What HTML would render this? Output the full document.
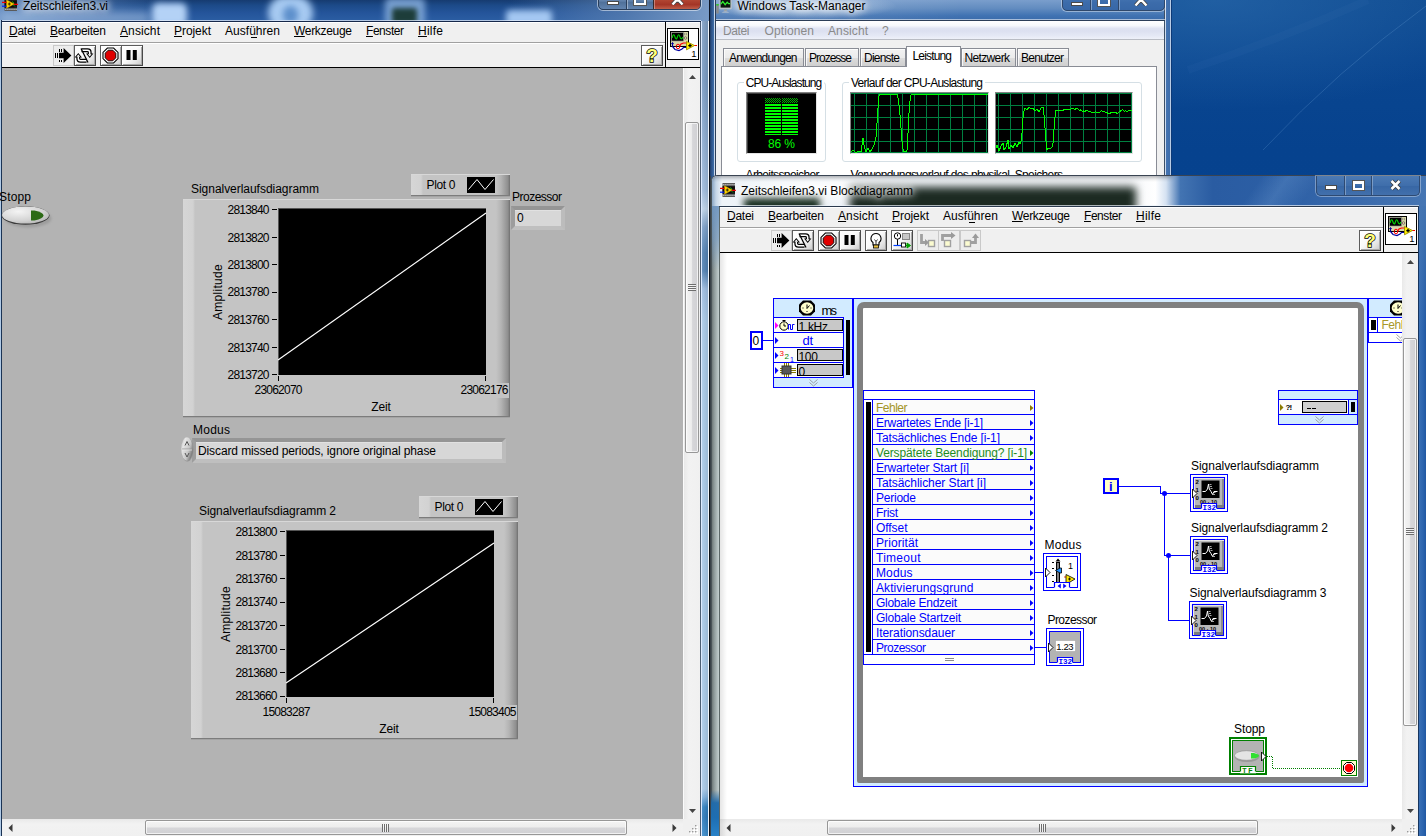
<!DOCTYPE html>
<html lang="de"><head><meta charset="utf-8"><title>Zeitschleifen3.vi</title><style>
html,body{margin:0;padding:0}
body{width:1426px;height:836px;overflow:hidden;position:relative;background:#0b4791;font-family:"Liberation Sans",sans-serif;font-size:12px;color:#000}
.a{position:absolute;box-sizing:border-box}
.t{position:absolute;white-space:nowrap}
.m::first-letter{text-decoration:underline;text-underline-offset:1px}
svg{overflow:visible}
</style></head>
<body>
<div class="a" style="left:0px;top:0px;width:1426px;height:836px;background:radial-gradient(ellipse 300px 110px at 1215px 0px,rgba(50,115,180,.5),rgba(50,115,180,0) 100%),linear-gradient(to bottom,#0e4a90 0,#0a4690 60px,#06428e 150px,#0a4892 100%);"></div>
<svg class="a" style="left:1168px;top:0px;overflow:hidden;" width="258" height="176"><g fill="none"><path d="M258 6Q170 70 95 150" stroke="rgba(140,190,235,.2)" stroke-width="1"/><path d="M20 70Q110 40 200 0" stroke="rgba(120,170,220,.04)" stroke-width="8"/></g></svg>
<div class="a" style="left:0;top:0;width:709px;height:836px;overflow:hidden"><div class="a" style="left:0px;top:0px;width:709px;height:836px;background:#6f94c2;"></div><div class="a" style="left:0px;top:0px;width:709px;height:21px;overflow:hidden;"><div class="a" style="left:0px;top:0px;width:709px;height:21px;background:linear-gradient(to right,rgba(130,165,210,.75) 0,rgba(90,130,185,.55) 12%,rgba(40,90,150,0) 24%,rgba(40,90,150,0) 72%,rgba(105,140,185,.6) 88%,rgba(125,158,200,.95) 100%),linear-gradient(#163b70 0,#1c4a88 25%,#24549a 60%,#2b5ea3 100%);"></div><div class="a" style="left:152px;top:3px;width:35px;height:23px;background:#b4d2f6;filter:blur(3px);border-radius:6px;"></div><div class="a" style="left:268px;top:-4px;width:45px;height:34px;background:#a8cbf2;filter:blur(3.5px);border-radius:22px;"></div><div class="a" style="left:283px;top:6px;width:15px;height:18px;background:#5d8fcb;filter:blur(3px);border-radius:8px;"></div><div class="a" style="left:385px;top:-2px;width:40px;height:28px;background:#8db4e2;filter:blur(3px);border-radius:5px;opacity:.8;"></div><div class="a" style="left:392px;top:8px;width:25px;height:16px;background:#1d3d3a;filter:blur(2.5px);border-radius:3px;"></div><div class="a" style="left:506px;top:10px;width:46px;height:16px;background:#a5c8f2;filter:blur(3px);border-radius:4px;"></div><div class="a" style="left:0px;top:12px;width:150px;height:12px;background:#a9c4e4;filter:blur(5px);opacity:.6;"></div></div><div class="a" style="left:700px;top:21px;width:9px;height:815px;background:linear-gradient(to right,#4d5e74 0,#4d5e74 1px,#dceaff 1px,#dceaff 2px,#a9c8ea 2px,#9cbbe0 5px,#8aabd2 8px,#eef4fc 8px,#eef4fc 9px);"></div><div class="a" style="left:702px;top:21px;width:6px;height:815px;background:linear-gradient(to bottom,#7c9cc2 0,#7799c2 60px,#9dbadc 170px,#bcd2e8 188px,#7a9ec8 206px,#4f7fb2 232px,#4f7fb2 250px,#9cbbe0 268px,#a8c8e8 300px,#a8c8e8 768px,#7fb0de 776px,#2f7fc0 786px,#2a78ba 796px,#3a8ccc 815px);"></div><div class="a" style="left:702px;top:21px;width:6px;height:815px;background:linear-gradient(to right,rgba(255,255,255,.12),rgba(0,0,0,.08));"></div><div class="a" style="left:0px;top:20px;width:2px;height:816px;background:linear-gradient(to right,#b0cae6 0,#b0cae6 1px,#1a3354 1px);"></div><div class="a" style="left:2px;top:20px;width:699px;height:1px;background:rgba(225,235,248,.75);"></div><svg class="a" style="left:1.5px;top:-3px;" width="16" height="14"><rect x="2.5" y="0" width="12.5" height="14" fill="#5a5a5a"/><rect x="2.5" y="3.2" width="12.5" height="7.6" fill="#0c0c0c"/><path d="M3.3 1.6h11.5M3.3 12.4h11.5" stroke="#d0d0d0" stroke-width="1.3" stroke-dasharray="1.1 0.950"/><path d="M10 4.5l2 1.5-1 1.5 2 2" fill="none" stroke="#10a010" stroke-width="1"/><path d="M4.5 2.8L12.2 7L4.5 11.2Z" fill="#ffd400" stroke="#c89a00" stroke-width=".5"/><path d="M5.8 7h3M7.3 5.5v3" stroke="#3a3000" stroke-width="1.1"/><path d="M0 5.3h4.5M11.8 7.3h4.2" stroke="#f00000" stroke-width="1.2"/><path d="M0 9.2h4.5" stroke="#0020f0" stroke-width="1.2"/></svg><span class="t" style="font-size:12px;line-height:16px;top:-2.16px;left:23px;letter-spacing:-0.065px;text-shadow:0 0 6px #fff,0 0 9px #fff,0 0 12px rgba(255,255,255,.9);">Zeitschleifen3.vi</span><div class="a" style="left:598px;top:-6px;width:103px;height:16px;border:1px solid #2a3f5c;border-radius:0 0 5px 5px;box-shadow:0 0 0 1px rgba(255,255,255,.5);background:linear-gradient(#7190b6,#5f80aa 45%,#4f7099 50%,#6385b0);overflow:hidden;"><div class="a" style="left:27px;top:0px;width:1px;height:16px;background:#2a3f5c;"></div><div class="a" style="left:28px;top:0px;width:1px;height:16px;background:rgba(255,255,255,.4);"></div><div class="a" style="left:54px;top:0px;width:1px;height:16px;background:#3a2a2a;"></div><div class="a" style="left:55px;top:0px;width:47px;height:16px;background:linear-gradient(#c98674 0,#b04330 35%,#a43526 60%,#bd5a46 85%,#d68a7a 100%);box-shadow:inset 0 0 0 1px rgba(255,255,255,.35);"></div></div><div class="a" style="left:607px;top:0.5px;width:12px;height:4px;background:#fff;border:1px solid #4a4a4a;"></div><div class="a" style="left:634px;top:-4px;width:12px;height:8.5px;border:2px solid #fff;outline:1px solid #555;"></div><svg class="a" style="left:671px;top:-3px;overflow:hidden;" width="13" height="8"><path d="M1 -3L6.5 3L12 -3M1.5 7.5L6.5 2L11.5 7.5" stroke="#444" stroke-width="4" fill="none"/><path d="M1 -3L6.5 3L12 -3M1.5 7.5L6.5 2L11.5 7.5" stroke="#fff" stroke-width="2.4" fill="none"/></svg><div class="a" style="left:1px;top:21px;width:700px;height:1px;background:#16284a;"></div><div class="a" style="left:2px;top:22px;width:698px;height:814px;background:#f0f0f0;"></div><div class="a" style="left:2px;top:22px;width:698px;height:1px;background:#fff;"></div><div class="a" style="left:2px;top:42px;width:663px;height:1px;background:#a0a0a0;"></div><div class="a" style="left:2px;top:43px;width:663px;height:1px;background:#fff;"></div><div class="a" style="left:2px;top:67px;width:698px;height:1px;background:#000;"></div><div class="a" style="left:665px;top:22px;width:1px;height:46px;background:#000;"></div><span class="t m" style="font-size:12px;line-height:16px;top:22.84px;left:9px;letter-spacing:-0.258px;">Datei</span><span class="t m" style="font-size:12px;line-height:16px;top:22.84px;left:50px;letter-spacing:-0.229px;">Bearbeiten</span><span class="t m" style="font-size:12px;line-height:16px;top:22.84px;left:120px;letter-spacing:0.104px;">Ansicht</span><span class="t m" style="font-size:12px;line-height:16px;top:22.84px;left:174px;letter-spacing:-0.06px;">Projekt</span><span class="t" style="font-size:12px;line-height:16px;top:22.84px;left:225px;letter-spacing:0.037px;">Ausführen</span><span class="t m" style="font-size:12px;line-height:16px;top:22.84px;left:294px;letter-spacing:-0.311px;">Werkzeuge</span><span class="t m" style="font-size:12px;line-height:16px;top:22.84px;left:366px;letter-spacing:-0.451px;">Fenster</span><span class="t m" style="font-size:12px;line-height:16px;top:22.84px;left:418px;letter-spacing:0.246px;">Hilfe</span><div class="a" style="left:251px;top:37px;width:6px;height:1px;background:#000;"></div><div class="a" style="left:53px;top:45px;width:21px;height:21px;background:#ededed;border:1px solid #c9c9c9;"><svg class="a" style="left:-1px;top:-1px" width="21" height="21" viewBox="0 0 21 21"><path d="M2.5 8v5M4.5 8v5M6.5 4v2.5M8.5 4v2.5M6.5 14.5v2.5M8.5 14.5v2.5" stroke="#000" stroke-width="1" fill="none" shape-rendering="crispEdges"/><path d="M6 7.8h4.6V3L18.4 10.5L10.6 18V13.2H6z" fill="#000"/></svg></div><div class="a" style="left:74px;top:45px;width:22px;height:21px;background:linear-gradient(135deg,#ffffff 0,#fafafa 45%,#e4e4e4 75%,#c8c8c8 100%);border:1px solid #5c5c5c;border-right-color:#484848;border-bottom-color:#484848;box-shadow:inset 1px 1px 0 #fff,inset -1px -1px 0 #a8a8a8;"><svg class="a" style="left:-1px;top:-1px" width="21" height="21" viewBox="0 0 21 21"><g fill="none" stroke="#000" stroke-width="4" stroke-linejoin="round"><path d="M7.5 5.2h6q2.2 0 2.2 2.2v1.5"/><path d="M12.5 15.800h-6q-2.2 0-2.2-2.2v-1.5"/></g><path d="M12 8.5h7.400l-3.700 4.400zM8 12.5h-7.400l3.700-4.400z" fill="#000"/><g fill="none" stroke="#fff" stroke-width="1.5"><path d="M7.5 5.2h6q2.2 0 2.2 2.2v2"/><path d="M12.5 15.800h-6q-2.2 0-2.2-2.2v-2"/></g><path d="M13.800 9.300h3.800l-1.900 2.300zM6.2 11.700h-3.800l1.900-2.300z" fill="#fff"/><path d="M7 3.5L14 17.5" stroke="#000" stroke-width="1.2"/></svg></div><div class="a" style="left:100px;top:45px;width:22px;height:21px;background:linear-gradient(135deg,#ffffff 0,#fafafa 45%,#e4e4e4 75%,#c8c8c8 100%);border:1px solid #5c5c5c;border-right-color:#484848;border-bottom-color:#484848;box-shadow:inset 1px 1px 0 #fff,inset -1px -1px 0 #a8a8a8;"><svg class="a" style="left:-1px;top:-1px" width="21" height="21" viewBox="0 0 21 21"><path d="M7.400 3h6.2l4.400 4.400v6.2l-4.400 4.400h-6.2l-4.400-4.400v-6.2z" fill="#fff" stroke="#000" stroke-width="1.100"/><path d="M8.2 5.2h4.600l3 3v4.600l-3 3h-4.600l-3-3v-4.600z" fill="#e00000" stroke="#000" stroke-width=".9"/></svg></div><div class="a" style="left:121px;top:45px;width:22px;height:21px;background:linear-gradient(135deg,#ffffff 0,#fafafa 45%,#e4e4e4 75%,#c8c8c8 100%);border:1px solid #5c5c5c;border-right-color:#484848;border-bottom-color:#484848;box-shadow:inset 1px 1px 0 #fff,inset -1px -1px 0 #a8a8a8;"><svg class="a" style="left:-1px;top:-1px" width="21" height="21" viewBox="0 0 21 21"><rect x="5.5" y="5" width="4" height="10" fill="#000"/><rect x="11.800" y="5" width="4" height="10" fill="#000"/></svg></div><div class="a" style="left:641px;top:45px;width:22px;height:21px;background:linear-gradient(135deg,#ffffff 0,#fafafa 45%,#e4e4e4 75%,#c8c8c8 100%);border:1px solid #5c5c5c;border-right-color:#484848;border-bottom-color:#484848;box-shadow:inset 1px 1px 0 #fff,inset -1px -1px 0 #a8a8a8;"><span class="t" style="left:0;top:-1px;width:20px;text-align:center;font-size:19px;line-height:21px;font-weight:bold;color:#ffff78;-webkit-text-stroke:1.5px #000;paint-order:stroke fill;">?</span></div><svg class="a" style="left:667px;top:28px;" width="32" height="32"><rect x="0.5" y="0.5" width="31" height="31" fill="#fff" stroke="#000"/><rect x="3.5" y="3.5" width="18" height="15" fill="#d8d8a8" stroke="#000" stroke-width="1"/><rect x="4.6" y="4.6" width="11.8" height="8.4" fill="#000" stroke="#8c8c8c" stroke-width=".6"/><path d="M5.2 10C5.8 6 7.2 6 7.8 8.5S9.6 12 10.4 9S12 6 12.8 8.5S14.6 12 15.8 9" fill="none" stroke="#00d000" stroke-width="1.1"/><circle cx="18.5" cy="10" r="1.3" fill="#f4d8a8" stroke="#555" stroke-width=".7"/><path d="M17.700 5v2.200M19.4 5v2.200" stroke="#777" stroke-width=".7"/><path d="M5.5 15v3.5l2.5 3l4 1l3-1.5l1.5-1.5h3" fill="none" stroke="#0000a0" stroke-width="1.200"/><path d="M4.5 16l1-1.5l1 1.5" fill="none" stroke="#0000a0" stroke-width="1"/><path d="M20 15h-3.5l-2.5 1l-1.5 2.5M27 17.5h3" fill="none" stroke="#ff0000" stroke-width="1.200"/><ellipse cx="11" cy="18.5" rx="1.8" ry="2.3" fill="none" stroke="#ff0000" stroke-width="1"/><path d="M19.5 13.5l8 4-8 4.3z" fill="#fff000" stroke="#a09000" stroke-width=".9"/><path d="M21.3 17.6h3.4M23 15.900v3.4" stroke="#000" stroke-width="1.3"/><text x="24.3" y="29" font-family="Liberation Sans,sans-serif" font-size="9.5" fill="#000">1</text></svg><div class="a" style="left:2px;top:68px;width:681px;height:751px;background:#b3b3b3;"></div><div class="a" style="left:683px;top:68px;width:1px;height:751px;background:#fbfbfb;"></div><div class="a" style="left:2px;top:819px;width:681px;height:1px;background:#fbfbfb;"></div><div class="a" style="left:684px;top:68px;width:16px;height:751px;background:linear-gradient(to right,#e9e9e9,#f2f2f2 30%,#f0f0f0);"></div><div class="a" style="left:685px;top:122px;width:14px;height:331px;background:linear-gradient(to right,#f4f4f4,#ededed 45%,#d6d6d9 55%,#d0d0d3);border:1px solid #979797;border-radius:2px;box-shadow:inset 0 0 0 1px rgba(255,255,255,.7);"></div><div class="a" style="left:688px;top:283.5px;width:8px;height:8px;background:repeating-linear-gradient(#6e6e6e 0,#6e6e6e 1px,rgba(255,255,255,.6) 1px,rgba(255,255,255,.6) 2px);height:7px;"></div><svg class="a" style="left:688.5px;top:74.5px;" width="7" height="4"><path d="M0 4L3.5 0L7 4Z" fill="#454545"/></svg><svg class="a" style="left:688.5px;top:809px;" width="7" height="4"><path d="M0 0L3.5 4L7 0Z" fill="#454545"/></svg><div class="a" style="left:2px;top:819px;width:681px;height:17px;background:linear-gradient(#e9e9e9,#f2f2f2 30%,#f0f0f0);"></div><div class="a" style="left:145px;top:820px;width:482px;height:15px;background:linear-gradient(#f4f4f4,#ededed 45%,#d6d6d9 55%,#d0d0d3);border:1px solid #979797;border-radius:2px;box-shadow:inset 0 0 0 1px rgba(255,255,255,.7);"></div><div class="a" style="left:382px;top:824px;width:7px;height:8px;background:repeating-linear-gradient(to right,#6e6e6e 0,#6e6e6e 1px,rgba(255,255,255,.6) 1px,rgba(255,255,255,.6) 2px);"></div><svg class="a" style="left:8px;top:824px;" width="5" height="8"><path d="M4.5 0L0.5 4L4.5 8Z" fill="#3a3a3a"/></svg><svg class="a" style="left:672px;top:824px;" width="5" height="8"><path d="M0.5 0L4.5 4L0.5 8Z" fill="#3a3a3a"/></svg><svg class="a" style="left:689px;top:825px;" width="10" height="10"><rect x="7" y="1" width="2" height="2" fill="#fff"/><rect x="6" y="0" width="1.4" height="1.4" fill="#9a9a9a"/><rect x="4" y="4" width="2" height="2" fill="#fff"/><rect x="3" y="3" width="1.4" height="1.4" fill="#9a9a9a"/><rect x="7" y="4" width="2" height="2" fill="#fff"/><rect x="6" y="3" width="1.4" height="1.4" fill="#9a9a9a"/><rect x="1" y="7" width="2" height="2" fill="#fff"/><rect x="0" y="6" width="1.4" height="1.4" fill="#9a9a9a"/><rect x="4" y="7" width="2" height="2" fill="#fff"/><rect x="3" y="6" width="1.4" height="1.4" fill="#9a9a9a"/><rect x="7" y="7" width="2" height="2" fill="#fff"/><rect x="6" y="6" width="1.4" height="1.4" fill="#9a9a9a"/></svg><span class="t" style="font-size:12px;line-height:16px;top:180.84px;left:191px;letter-spacing:-0.035px;">Signalverlaufsdiagramm</span><div class="a" style="left:411px;top:174px;width:99px;height:22px;background:linear-gradient(to right,#d6d6d6 0,#d2d2d2 10px,#c4c4c4 12px,#c4c4c4 calc(100% - 14px),#b4b4b4 calc(100% - 9px),#8e8e8e calc(100% - 2px),#6f6f6f 100%);border-top:1px solid #d8d8d8;border-bottom:1px solid #7c7c7c;box-shadow:0 1px 0 #a4a4a4;"></div><span class="t" style="font-size:12px;line-height:16px;top:176.84px;left:426.5px;letter-spacing:-0.338px;">Plot 0</span><div class="a" style="left:467px;top:177px;width:28px;height:16px;background:#000;"></div><svg class="a" style="left:467px;top:177px;" width="28" height="16"><path d="M1.5 12.5L10 2.5L18 12.5L26.5 2.5" fill="none" stroke="#fff" stroke-width="1"/></svg><div class="a" style="left:183px;top:199px;width:327px;height:218px;background:linear-gradient(to right,#d6d6d6 0,#d2d2d2 10px,#c4c4c4 12px,#c4c4c4 calc(100% - 14px),#b4b4b4 calc(100% - 9px),#8e8e8e calc(100% - 2px),#6f6f6f 100%);border-top:1px solid #d8d8d8;border-bottom:1px solid #7c7c7c;box-shadow:0 1px 0 #a4a4a4;"></div><div class="a" style="left:278px;top:208px;width:208px;height:167px;background:#000;border-top:1px solid #555;border-left:1px solid #555;"></div><span class="t" style="font-size:12px;line-height:16px;top:202.34px;left:227.5px;letter-spacing:-0.786px;">2813840</span><div class="a" style="left:272px;top:209px;width:5px;height:1px;background:#000;"></div><span class="t" style="font-size:12px;line-height:16px;top:230.34px;left:227.5px;letter-spacing:-0.786px;">2813820</span><div class="a" style="left:272px;top:237px;width:5px;height:1px;background:#000;"></div><span class="t" style="font-size:12px;line-height:16px;top:257.34px;left:227.5px;letter-spacing:-0.786px;">2813800</span><div class="a" style="left:272px;top:264px;width:5px;height:1px;background:#000;"></div><span class="t" style="font-size:12px;line-height:16px;top:284.34px;left:227.5px;letter-spacing:-0.786px;">2813780</span><div class="a" style="left:272px;top:292px;width:5px;height:1px;background:#000;"></div><span class="t" style="font-size:12px;line-height:16px;top:312.34px;left:227.5px;letter-spacing:-0.786px;">2813760</span><div class="a" style="left:272px;top:319px;width:5px;height:1px;background:#000;"></div><span class="t" style="font-size:12px;line-height:16px;top:340.34px;left:227.5px;letter-spacing:-0.786px;">2813740</span><div class="a" style="left:272px;top:347px;width:5px;height:1px;background:#000;"></div><span class="t" style="font-size:12px;line-height:16px;top:367.34px;left:227.5px;letter-spacing:-0.786px;">2813720</span><div class="a" style="left:272px;top:374px;width:5px;height:1px;background:#000;"></div><div class="a" style="left:278px;top:376px;width:1px;height:5px;background:#000;"></div><div class="a" style="left:485px;top:376px;width:1px;height:5px;background:#000;"></div><span class="t" style="font-size:12px;line-height:16px;top:381.84px;left:254.5px;letter-spacing:-0.77px;">23062070</span><div class="a" style="left:460px;top:383px;width:49px;height:15px;background:#c4c4c4;"></div><span class="t" style="font-size:12px;line-height:16px;top:381.84px;left:460.5px;letter-spacing:-0.77px;">23062176</span><span class="t" style="font-size:12px;line-height:16px;top:398.84px;left:371.3px;letter-spacing:-0.172px;">Zeit</span><span class="t" style="left:187.5px;top:284px;width:60px;height:16px;line-height:16px;text-align:center;transform:rotate(-90deg);transform-origin:50% 50%;letter-spacing:0.3px;">Amplitude</span><svg class="a" style="left:278px;top:208px;" width="208" height="167"><path d="M0 152 L208 5" stroke="#fff" stroke-width="1.15"/></svg><span class="t" style="font-size:12px;line-height:16px;top:502.84px;left:199px;letter-spacing:-0.075px;">Signalverlaufsdiagramm 2</span><div class="a" style="left:419px;top:496px;width:99px;height:22px;background:linear-gradient(to right,#d6d6d6 0,#d2d2d2 10px,#c4c4c4 12px,#c4c4c4 calc(100% - 14px),#b4b4b4 calc(100% - 9px),#8e8e8e calc(100% - 2px),#6f6f6f 100%);border-top:1px solid #d8d8d8;border-bottom:1px solid #7c7c7c;box-shadow:0 1px 0 #a4a4a4;"></div><span class="t" style="font-size:12px;line-height:16px;top:498.84px;left:434.5px;letter-spacing:-0.338px;">Plot 0</span><div class="a" style="left:475px;top:499px;width:28px;height:16px;background:#000;"></div><svg class="a" style="left:475px;top:499px;" width="28" height="16"><path d="M1.5 12.5L10 2.5L18 12.5L26.5 2.5" fill="none" stroke="#fff" stroke-width="1"/></svg><div class="a" style="left:191px;top:521px;width:327px;height:218px;background:linear-gradient(to right,#d6d6d6 0,#d2d2d2 10px,#c4c4c4 12px,#c4c4c4 calc(100% - 14px),#b4b4b4 calc(100% - 9px),#8e8e8e calc(100% - 2px),#6f6f6f 100%);border-top:1px solid #d8d8d8;border-bottom:1px solid #7c7c7c;box-shadow:0 1px 0 #a4a4a4;"></div><div class="a" style="left:286px;top:530px;width:208px;height:167px;background:#000;border-top:1px solid #555;border-left:1px solid #555;"></div><span class="t" style="font-size:12px;line-height:16px;top:524.34px;left:235.5px;letter-spacing:-0.786px;">2813800</span><div class="a" style="left:280px;top:531px;width:5px;height:1px;background:#000;"></div><span class="t" style="font-size:12px;line-height:16px;top:548.34px;left:235.5px;letter-spacing:-0.786px;">2813780</span><div class="a" style="left:280px;top:555px;width:5px;height:1px;background:#000;"></div><span class="t" style="font-size:12px;line-height:16px;top:571.34px;left:235.5px;letter-spacing:-0.786px;">2813760</span><div class="a" style="left:280px;top:578px;width:5px;height:1px;background:#000;"></div><span class="t" style="font-size:12px;line-height:16px;top:594.34px;left:235.5px;letter-spacing:-0.786px;">2813740</span><div class="a" style="left:280px;top:602px;width:5px;height:1px;background:#000;"></div><span class="t" style="font-size:12px;line-height:16px;top:618.34px;left:235.5px;letter-spacing:-0.786px;">2813720</span><div class="a" style="left:280px;top:625px;width:5px;height:1px;background:#000;"></div><span class="t" style="font-size:12px;line-height:16px;top:642.34px;left:235.5px;letter-spacing:-0.786px;">2813700</span><div class="a" style="left:280px;top:649px;width:5px;height:1px;background:#000;"></div><span class="t" style="font-size:12px;line-height:16px;top:665.34px;left:235.5px;letter-spacing:-0.786px;">2813680</span><div class="a" style="left:280px;top:672px;width:5px;height:1px;background:#000;"></div><span class="t" style="font-size:12px;line-height:16px;top:688.34px;left:235.5px;letter-spacing:-0.786px;">2813660</span><div class="a" style="left:280px;top:696px;width:5px;height:1px;background:#000;"></div><div class="a" style="left:286px;top:698px;width:1px;height:5px;background:#000;"></div><div class="a" style="left:493px;top:698px;width:1px;height:5px;background:#000;"></div><span class="t" style="font-size:12px;line-height:16px;top:703.84px;left:262.5px;letter-spacing:-0.77px;">15083287</span><div class="a" style="left:468px;top:705px;width:49px;height:15px;background:#c4c4c4;"></div><span class="t" style="font-size:12px;line-height:16px;top:703.84px;left:468.5px;letter-spacing:-0.77px;">15083405</span><span class="t" style="font-size:12px;line-height:16px;top:720.84px;left:379.3px;letter-spacing:-0.172px;">Zeit</span><span class="t" style="left:195.5px;top:606px;width:60px;height:16px;line-height:16px;text-align:center;transform:rotate(-90deg);transform-origin:50% 50%;letter-spacing:0.3px;">Amplitude</span><svg class="a" style="left:286px;top:530px;" width="208" height="167"><path d="M0 153 L208 13" stroke="#fff" stroke-width="1.15"/></svg><span class="t" style="font-size:12px;line-height:16px;top:188.84px;left:-1px;letter-spacing:0.16px;">Stopp</span><svg class="a" style="left:0px;top:204px;" width="56" height="26"><defs><radialGradient id="bg1" cx=".35" cy=".3" r=".9"><stop offset="0" stop-color="#f4f4f4"/><stop offset=".6" stop-color="#d2d2d2"/><stop offset="1" stop-color="#a8a8a8"/></radialGradient></defs><ellipse cx="28" cy="14.5" rx="23.5" ry="9" fill="#8c8c8c" opacity=".55" style="filter:blur(1px)"/><ellipse cx="25.5" cy="11.5" rx="24" ry="9.3" fill="#3c3c3c"/><ellipse cx="25.5" cy="11" rx="23.5" ry="8.6" fill="url(#bg1)"/><path d="M31 6.5h3.5q9 2 9 5t-9 5H31z" fill="#2c6a16"/></svg><span class="t" style="font-size:12px;line-height:16px;top:188.84px;left:512px;letter-spacing:-0.504px;">Prozessor</span><div class="a" style="left:511px;top:205.5px;width:54px;height:24.5px;background:#d7d7d7;border-style:solid;border-width:4px;border-color:#959595 #bcbcbc #bfbfbf #9d9d9d;box-shadow:inset 0 1px 0 rgba(255,255,255,.25);"></div><span class="t" style="font-size:12px;line-height:16px;top:209.84px;left:517px;">0</span><span class="t" style="font-size:12px;line-height:16px;top:421.84px;left:193px;letter-spacing:0.242px;">Modus</span><div class="a" style="left:192px;top:438px;width:314px;height:25px;background:#d7d7d7;border-style:solid;border-width:4px;border-color:#959595 #bcbcbc #bfbfbf #9d9d9d;box-shadow:inset 0 1px 0 rgba(255,255,255,.25);"></div><span class="t" style="font-size:12px;line-height:16px;top:442.84px;left:198px;letter-spacing:-0.109px;">Discard missed periods, ignore original phase</span><svg class="a" style="left:180px;top:436px;" width="14" height="26"><defs><linearGradient id="sp1" x1="0" x2="1" y1="0" y2=".6"><stop offset="0" stop-color="#bdbdbd"/><stop offset=".3" stop-color="#e6e6e6"/><stop offset=".7" stop-color="#c8c8c8"/><stop offset="1" stop-color="#7a7a7a"/></linearGradient></defs><ellipse cx="7.4" cy="13.6" rx="6" ry="12" fill="#858585" opacity=".7"/><ellipse cx="7" cy="13" rx="5.8" ry="11.7" fill="url(#sp1)"/><path d="M2 13h10" stroke="#9a9a9a" stroke-width=".9"/><path d="M2 14h10" stroke="#e8e8e8" stroke-width=".7"/><path d="M5 9.5L7 5.5L9 9.5M5 17L7 21L9 17" fill="none" stroke="#555" stroke-width="1"/></svg></div>
<div class="a" style="left:0;top:0;width:1426px;height:836px;overflow:hidden"><div class="a" style="left:709px;top:0px;width:463px;height:836px;background:#3a6aa8;"></div><div class="a" style="left:709px;top:0px;width:7px;height:836px;background:linear-gradient(to right,#0b1424 0,#0b1424 1px,#1f3c66 1px,#2c5288 2.5px,#3f6ea8 5px,#c9d8ec 5px,#c9d8ec 6px,#2c3e58 6px);"></div><div class="a" style="left:716px;top:0px;width:449px;height:21px;background:linear-gradient(to right,rgba(255,255,255,.12) 0,rgba(255,255,255,.1) 25%,rgba(255,255,255,0) 55%),linear-gradient(#7a9ecc 0,#628cc0 40%,#4072b2 75%,#3a6aa8 100%);"></div><div class="a" style="left:716px;top:0px;width:184px;height:21px;background:radial-gradient(ellipse 95px 14px at 86px 6px,rgba(225,236,248,.75),rgba(225,236,248,0) 100%);"></div><div class="a" style="left:1164px;top:0px;width:8px;height:836px;background:linear-gradient(to right,#3d4f66 0,#3d4f66 1px,#cfdcee 1px,#cfdcee 2px,#4574b2 2px,#3e6dab 6px,#b9cce6 6px,#b9cce6 7px,#0d3a78 7px);"></div><div class="a" style="left:716px;top:19px;width:449px;height:1px;background:rgba(255,255,255,.55);"></div><div class="a" style="left:716px;top:20px;width:449px;height:1px;background:#2c3e58;"></div><svg class="a" style="left:716px;top:0px;" width="16" height="14"><rect x="0.3" y="4" width="2.4" height="9.5" fill="#8a8a8a"/><rect x="0.3" y="4" width="2.4" height="1.6" fill="#3c3"/><rect x="3.3" y="-1" width="12.4" height="10.2" rx="1" fill="#b9c1c7"/><rect x="4.6" y="0" width="9.8" height="7.6" fill="#0a120a"/><path d="M4.8 4.2l2-2.6 2.4 3 2-2.4 1.4 1.4h1.6" fill="none" stroke="#2ff02f" stroke-width="1.3"/><rect x="8" y="9.2" width="3" height="2.2" fill="#9aa2a8"/><path d="M5.5 12.4q4-1.6 8 0z" fill="#c5cbd0"/></svg><span class="t" style="font-size:12px;line-height:16px;top:-2.16px;left:737.5px;letter-spacing:0.009px;text-shadow:0 0 6px #fff,0 0 9px #fff,0 0 12px rgba(255,255,255,.9);">Windows Task-Manager</span><div class="a" style="left:1062px;top:-6px;width:103px;height:16.5px;border:1px solid #2f486c;border-radius:0 0 5px 5px;box-shadow:0 0 0 1px rgba(255,255,255,.4);background:linear-gradient(#4a78b4,#3c6cab 50%,#3867a6);overflow:hidden;"><div class="a" style="left:27px;top:0px;width:1px;height:18px;background:#2f486c;"></div><div class="a" style="left:28px;top:0px;width:1px;height:18px;background:rgba(255,255,255,.35);"></div><div class="a" style="left:55px;top:0px;width:1px;height:18px;background:#2f486c;"></div><div class="a" style="left:56px;top:0px;width:1px;height:18px;background:rgba(255,255,255,.35);"></div></div><div class="a" style="left:1071px;top:1.5px;width:12px;height:4px;background:#fff;border:1px solid #4a4a4a;"></div><div class="a" style="left:1098px;top:-3px;width:12px;height:8.5px;border:2px solid #fff;outline:1px solid #555;"></div><svg class="a" style="left:1134px;top:-3px;overflow:hidden;" width="14" height="9"><path d="M1 -3L7 3.5L13 -3M1.5 8.5L7 2.5L12.5 8.5" stroke="#444" stroke-width="4" fill="none"/><path d="M1 -3L7 3.5L13 -3M1.5 8.5L7 2.5L12.5 8.5" stroke="#fff" stroke-width="2.4" fill="none"/></svg><div class="a" style="left:716px;top:21px;width:448px;height:815px;background:#f0f0f0;"></div><div class="a" style="left:716px;top:21px;width:448px;height:19px;background:linear-gradient(#ffffff 0,#f6f8fc 25%,#dfe3f2 42%,#dce0f0 55%,#e4e8f5 80%,#eef1f9 100%);border-bottom:1px solid #b9bcc4;"></div><span class="t" style="font-size:12px;line-height:16px;top:22.84px;left:723px;letter-spacing:-0.379px;color:#8a8a8a;">Datei</span><span class="t" style="font-size:12px;line-height:16px;top:22.84px;left:764.5px;letter-spacing:0.114px;color:#8a8a8a;">Optionen</span><span class="t" style="font-size:12px;line-height:16px;top:22.84px;left:828px;letter-spacing:0.107px;color:#8a8a8a;">Ansicht</span><span class="t" style="font-size:12px;line-height:16px;top:22.84px;left:882px;color:#8a8a8a;">?</span><div class="a" style="left:721px;top:66px;width:436px;height:770px;background:#fff;border:1px solid #898c95;"></div><div class="a" style="left:723px;top:48px;width:80.5px;height:18px;background:linear-gradient(#f2f2f2 0,#ebebeb 50%,#dddddd 50%,#cfcfcf 100%);border:1px solid #898c95;border-bottom:none;box-shadow:inset 1px 1px 0 rgba(255,255,255,.8);"></div><span class="t" style="font-size:12px;line-height:16px;top:49.84px;left:729px;letter-spacing:-0.823px;">Anwendungen</span><div class="a" style="left:804.5px;top:48px;width:54px;height:18px;background:linear-gradient(#f2f2f2 0,#ebebeb 50%,#dddddd 50%,#cfcfcf 100%);border:1px solid #898c95;border-bottom:none;box-shadow:inset 1px 1px 0 rgba(255,255,255,.8);"></div><span class="t" style="font-size:12px;line-height:16px;top:49.84px;left:809px;letter-spacing:-1.004px;">Prozesse</span><div class="a" style="left:859.5px;top:48px;width:46px;height:18px;background:linear-gradient(#f2f2f2 0,#ebebeb 50%,#dddddd 50%,#cfcfcf 100%);border:1px solid #898c95;border-bottom:none;box-shadow:inset 1px 1px 0 rgba(255,255,255,.8);"></div><span class="t" style="font-size:12px;line-height:16px;top:49.84px;left:864px;letter-spacing:-0.781px;">Dienste</span><div class="a" style="left:961px;top:48px;width:54.5px;height:18px;background:linear-gradient(#f2f2f2 0,#ebebeb 50%,#dddddd 50%,#cfcfcf 100%);border:1px solid #898c95;border-bottom:none;box-shadow:inset 1px 1px 0 rgba(255,255,255,.8);"></div><span class="t" style="font-size:12px;line-height:16px;top:49.84px;left:964.5px;letter-spacing:-0.645px;">Netzwerk</span><div class="a" style="left:1016.5px;top:48px;width:52.5px;height:18px;background:linear-gradient(#f2f2f2 0,#ebebeb 50%,#dddddd 50%,#cfcfcf 100%);border:1px solid #898c95;border-bottom:none;box-shadow:inset 1px 1px 0 rgba(255,255,255,.8);"></div><span class="t" style="font-size:12px;line-height:16px;top:49.84px;left:1021px;letter-spacing:-0.719px;">Benutzer</span><div class="a" style="left:905.5px;top:45.5px;width:55.5px;height:21.5px;background:#fff;border:1px solid #898c95;border-bottom:none;"></div><span class="t" style="font-size:12px;line-height:16px;top:48.34px;left:912.5px;letter-spacing:-0.839px;">Leistung</span><div class="a" style="left:737px;top:82px;width:89px;height:80px;border:1px solid #d5dfe5;border-radius:3px;"></div><div class="a" style="left:743.7px;top:80px;width:80.5px;height:5px;background:#fff;"></div><span class="t" style="font-size:12px;line-height:16px;top:74.84px;left:745.7px;letter-spacing:-0.94px;">CPU-Auslastung</span><div class="a" style="left:842px;top:82px;width:300px;height:80px;border:1px solid #d5dfe5;border-radius:3px;"></div><div class="a" style="left:849px;top:80px;width:136px;height:5px;background:#fff;"></div><span class="t" style="font-size:12px;line-height:16px;top:74.84px;left:851px;letter-spacing:-0.723px;">Verlauf der CPU-Auslastung</span><div class="a" style="left:746px;top:92px;width:71px;height:62px;background:#000;border:1px solid #828282;border-right-color:#e3e3e3;border-bottom-color:#e3e3e3;box-shadow:inset 1px 1px 0 #3a3a3a;"></div><svg class="a" style="left:765px;top:98px;" width="16" height="5"><path d="M0 0.5h16M0 2.5h16M0 4.5h16" stroke="#00b000" stroke-width="1" stroke-dasharray="1 1" shape-rendering="crispEdges"/><path d="M1 1.5h15M1 3.5h15" stroke="#00b000" stroke-width="1" stroke-dasharray="1 1" shape-rendering="crispEdges"/></svg><div class="a" style="left:765px;top:104px;width:16px;height:31px;background:repeating-linear-gradient(#00ff00 0,#00ff00 2px,#000 2px,#000 3px);"></div><svg class="a" style="left:782.2px;top:98px;" width="16" height="5"><path d="M0 0.5h16M0 2.5h16M0 4.5h16" stroke="#00b000" stroke-width="1" stroke-dasharray="1 1" shape-rendering="crispEdges"/><path d="M1 1.5h15M1 3.5h15" stroke="#00b000" stroke-width="1" stroke-dasharray="1 1" shape-rendering="crispEdges"/></svg><div class="a" style="left:782.2px;top:104px;width:16px;height:31px;background:repeating-linear-gradient(#00ff00 0,#00ff00 2px,#000 2px,#000 3px);"></div><span class="t" style="font-size:12px;line-height:16px;top:135.84px;left:768px;letter-spacing:-0.12px;color:#00ff00;">86 %</span><div class="a" style="left:850px;top:92px;width:139px;height:62px;background:#000;border:1px solid #828282;border-right-color:#e3e3e3;border-bottom-color:#e3e3e3;overflow:hidden;"><svg class="a" style="left:0;top:0" width="137" height="61"><rect x="0" y="0" width="137" height="61" fill="#000"/><path d="M3 0V61M15.08 0V61M27.16 0V61M39.24 0V61M51.32 0V61M63.4 0V61M75.48 0V61M87.56 0V61M99.64 0V61M111.72 0V61M123.8 0V61M135.88 0V61M0 0.5H137M0 12.5H137M0 24.5H137M0 36.5H137M0 48.5H137M0 59.5H137" stroke="#008040" stroke-width="1" fill="none" shape-rendering="crispEdges"/><polyline points="0,59 2,57 4,59 6,59 8,58 10,59 11,52 12,45 13,52 14,56 15,59 17,55 19,59 21,56 23,52 25,44 26,30 27,15 28,3 29,1 46,1 47,5 48,12 49,22 50,35 51,48 52,56 53,59 54,58 55,59 56,57 57,40 58,20 59,8 60,2 61,1 137,1" fill="none" stroke="#00ff00" stroke-width="1" shape-rendering="crispEdges"/></svg></div><div class="a" style="left:995px;top:92px;width:138px;height:62px;background:#000;border:1px solid #828282;border-right-color:#e3e3e3;border-bottom-color:#e3e3e3;overflow:hidden;"><svg class="a" style="left:0;top:0" width="136" height="61"><rect x="0" y="0" width="136" height="61" fill="#000"/><path d="M2.5 0V61M14.58 0V61M26.66 0V61M38.74 0V61M50.82 0V61M62.9 0V61M74.98 0V61M87.06 0V61M99.14 0V61M111.22 0V61M123.3 0V61M135.38 0V61M0 0.5H136M0 12.5H136M0 24.5H136M0 36.5H136M0 48.5H136M0 59.5H136" stroke="#008040" stroke-width="1" fill="none" shape-rendering="crispEdges"/><polyline points="0,55 1,52 3,58 5,53 7,50 8,57 10,54 12,47 13,56 15,52 17,55 19,50 21,54 23,49 24,51 25,48 26,40 27,25 28,18 29,15 31,17 33,14 35,16 37,15 39,18 41,16 43,19 45,15 47,14 48,22 49,35 50,48 51,57 52,55 54,56 56,54 57,50 58,36 59,24 60,17 62,18 64,17 66,18 68,16.7 69.5,16.8 71,16.4 72.5,16.7 74,17.1 75.5,15.7 77,15.5 78.5,16.6 80,15.8 81.5,15.5 83,17.1 84.5,17 86,18.1 87.5,18 89,18.4 90.5,17.3 92,17.8 93.5,18.9 95,19 96.5,19.8 98,20 99.5,18.6 101,19.4 102.5,19.7 104,19.1 105.5,17.6 107,18.8 108.5,18.7 110,19.4 111.5,20 113,20 114.5,20 116,19.7 117.5,20 119,19.8 120.5,20 122,20 123.5,18.7 125,17.5 126.5,16.6 128,18.1 129.5,17.9 131,18.3 132.5,17.7 134,17.7 135.5,17.4 137,16.9" fill="none" stroke="#00ff00" stroke-width="1" shape-rendering="crispEdges"/></svg></div><div class="a" style="left:716px;top:165px;width:448px;height:10.5px;overflow:hidden;"><div class="a" style="left:-716px;top:-165px;width:1426px;height:836px;"><span class="t" style="font-size:12px;line-height:16px;top:167.34px;left:745.5px;letter-spacing:-0.623px;">Arbeitsspeicher</span><span class="t" style="font-size:12px;line-height:16px;top:167.34px;left:850.5px;letter-spacing:-0.625px;">Verwendungsverlauf des physikal. Speichers</span></div></div></div>
<div class="a" style="left:0;top:0;width:1426px;height:836px;overflow:hidden"><div class="a" style="left:709px;top:176px;width:2px;height:660px;background:linear-gradient(to right,#0e1218 0,#0e1218 1px,#3a4248 1px);"></div><div class="a" style="left:711px;top:175px;width:715px;height:661px;background:#e4ecf4;border-top:1px solid #3a4452;border-left:1px solid #4a5458;border-radius:6px 0 0 0;"></div><div class="a" style="left:712px;top:176px;width:714px;height:30px;overflow:hidden;border-radius:5px 0 0 0;"><div class="a" style="left:0px;top:0px;width:715px;height:31px;background:linear-gradient(to right,#8aa6c4 0,#c4d6e8 4px,#eef3f8 10px,#f4f6f9 58%,#ffffff 62%,#d5e2f2 63.5%,#4374b2 65.5%,#2a5ca2 70%,#2c5fa5 80%,#3a6aac 90%,#4676b3 100%);"></div><div class="a" style="left:0px;top:0px;width:460px;height:31px;background:radial-gradient(ellipse 100px 16px at 112px 12px,rgba(255,255,255,.9),rgba(255,255,255,0) 100%);"></div><div class="a" style="left:32px;top:21px;width:76px;height:19px;background:#1f3426;filter:blur(3.5px);border-radius:3px;"></div><div class="a" style="left:138px;top:11px;width:286px;height:29px;background:#1c2a22;filter:blur(4px);border-radius:3px;"></div><div class="a" style="left:-5px;top:-8px;width:465px;height:9px;background:#10131a;filter:blur(2.5px);opacity:.45;"></div><div class="a" style="left:470px;top:0px;width:245px;height:31px;background:linear-gradient(125deg,rgba(255,255,255,0) 0,rgba(255,255,255,0) 30%,rgba(160,200,240,.18) 40%,rgba(255,255,255,0) 52%,rgba(255,255,255,0) 100%);"></div></div><div class="a" style="left:712px;top:206px;width:7px;height:630px;background:linear-gradient(to right,#6e7878 0,#8c9898 2px,#a8b4b4 4.5px,#c3cfcf 7px);"></div><div class="a" style="left:712px;top:206px;width:7px;height:64px;background:linear-gradient(rgba(110,150,195,.9) 0,rgba(110,150,195,.6) 50%,rgba(110,150,195,0) 100%);"></div><div class="a" style="left:711px;top:790px;width:8px;height:46px;background:linear-gradient(rgba(35,115,185,0) 0,rgba(30,105,170,.95) 28%,rgba(30,110,178,1) 60%,rgba(40,130,200,1) 100%);"></div><div class="a" style="left:719px;top:206px;width:1px;height:630px;background:#5c6868;"></div><div class="a" style="left:1418px;top:206px;width:8px;height:630px;background:linear-gradient(to right,#16355f 0,#16355f 1px,#3a70b5 1px,#2c64ae 5px,#2058a2 8px);"></div><div class="a" style="left:1419px;top:206px;width:7px;height:124px;background:linear-gradient(rgba(70,118,178,.9) 0,rgba(70,118,178,0) 100%);"></div><div class="a" style="left:719px;top:205px;width:700px;height:1px;background:rgba(235,242,250,.7);"></div><div class="a" style="left:719px;top:206px;width:700px;height:1px;background:#2b3a4e;"></div><svg class="a" style="left:720px;top:183px;" width="16" height="14"><rect x="2.5" y="0" width="12.5" height="14" fill="#5a5a5a"/><rect x="2.5" y="3.2" width="12.5" height="7.6" fill="#0c0c0c"/><path d="M3.3 1.6h11.5M3.3 12.4h11.5" stroke="#d0d0d0" stroke-width="1.3" stroke-dasharray="1.1 0.950"/><path d="M10 4.5l2 1.5-1 1.5 2 2" fill="none" stroke="#10a010" stroke-width="1"/><path d="M4.5 2.8L12.2 7L4.5 11.2Z" fill="#ffd400" stroke="#c89a00" stroke-width=".5"/><path d="M5.8 7h3M7.3 5.5v3" stroke="#3a3000" stroke-width="1.1"/><path d="M0 5.3h4.5M11.8 7.3h4.2" stroke="#f00000" stroke-width="1.2"/><path d="M0 9.2h4.5" stroke="#0020f0" stroke-width="1.2"/></svg><span class="t" style="font-size:12px;line-height:16px;top:182.84px;left:741px;text-shadow:0 0 6px #fff,0 0 9px #fff,0 0 12px rgba(255,255,255,.9);">Zeitschleifen3.vi Blockdiagramm</span><div class="a" style="left:1316px;top:176px;width:104px;height:19.5px;border:1px solid #2e4a72;border-top:none;border-radius:0 0 5px 5px;box-shadow:0 0 0 1px rgba(255,255,255,.35);background:linear-gradient(#4c7ab4,#3f6eab 50%,#3867a5 55%,#4270ac);overflow:hidden;"><div class="a" style="left:27px;top:0px;width:1px;height:25px;background:#2e4a72;"></div><div class="a" style="left:28px;top:0px;width:1px;height:25px;background:rgba(255,255,255,.3);"></div><div class="a" style="left:54px;top:0px;width:1px;height:25px;background:#2e4a72;"></div><div class="a" style="left:55px;top:0px;width:1px;height:25px;background:rgba(255,255,255,.3);"></div></div><div class="a" style="left:1325px;top:185px;width:12px;height:5px;background:#fff;border:1px solid #4a4a4a;"></div><div class="a" style="left:1352.5px;top:180.5px;width:11px;height:9px;border:2px solid #fff;border-top-width:3px;outline:1px solid #555;"></div><svg class="a" style="left:1390px;top:180px;" width="11" height="10"><path d="M1.5 1L9.5 9M9.5 1L1.5 9" stroke="#3a3a3a" stroke-width="4.2" fill="none"/><path d="M1.5 1L9.5 9M9.5 1L1.5 9" stroke="#fff" stroke-width="2.6" fill="none"/></svg><div class="a" style="left:720px;top:207px;width:698px;height:629px;background:#f0f0f0;"></div><div class="a" style="left:720px;top:207px;width:698px;height:1px;background:#fff;"></div><div class="a" style="left:720px;top:227px;width:663px;height:1px;background:#a0a0a0;"></div><div class="a" style="left:720px;top:228px;width:663px;height:1px;background:#fff;"></div><div class="a" style="left:720px;top:252px;width:698px;height:1px;background:#000;"></div><div class="a" style="left:1383px;top:207px;width:1px;height:46px;background:#000;"></div><span class="t m" style="font-size:12px;line-height:16px;top:207.84px;left:727px;letter-spacing:-0.258px;">Datei</span><span class="t m" style="font-size:12px;line-height:16px;top:207.84px;left:768px;letter-spacing:-0.229px;">Bearbeiten</span><span class="t m" style="font-size:12px;line-height:16px;top:207.84px;left:838px;letter-spacing:0.104px;">Ansicht</span><span class="t m" style="font-size:12px;line-height:16px;top:207.84px;left:892px;letter-spacing:-0.06px;">Projekt</span><span class="t" style="font-size:12px;line-height:16px;top:207.84px;left:943px;letter-spacing:0.037px;">Ausführen</span><span class="t m" style="font-size:12px;line-height:16px;top:207.84px;left:1012px;letter-spacing:-0.311px;">Werkzeuge</span><span class="t m" style="font-size:12px;line-height:16px;top:207.84px;left:1084px;letter-spacing:-0.451px;">Fenster</span><span class="t m" style="font-size:12px;line-height:16px;top:207.84px;left:1136px;letter-spacing:0.246px;">Hilfe</span><div class="a" style="left:969px;top:222px;width:6px;height:1px;background:#000;"></div><div class="a" style="left:771px;top:230px;width:21px;height:21px;background:#ededed;border:1px solid #c9c9c9;"><svg class="a" style="left:-1px;top:-1px" width="21" height="21" viewBox="0 0 21 21"><path d="M2.5 8v5M4.5 8v5M6.5 4v2.5M8.5 4v2.5M6.5 14.5v2.5M8.5 14.5v2.5" stroke="#000" stroke-width="1" fill="none" shape-rendering="crispEdges"/><path d="M6 7.8h4.6V3L18.4 10.5L10.6 18V13.2H6z" fill="#000"/></svg></div><div class="a" style="left:792px;top:230px;width:22px;height:21px;background:linear-gradient(135deg,#ffffff 0,#fafafa 45%,#e4e4e4 75%,#c8c8c8 100%);border:1px solid #5c5c5c;border-right-color:#484848;border-bottom-color:#484848;box-shadow:inset 1px 1px 0 #fff,inset -1px -1px 0 #a8a8a8;"><svg class="a" style="left:-1px;top:-1px" width="21" height="21" viewBox="0 0 21 21"><g fill="none" stroke="#000" stroke-width="4" stroke-linejoin="round"><path d="M7.5 5.2h6q2.2 0 2.2 2.2v1.5"/><path d="M12.5 15.800h-6q-2.2 0-2.2-2.2v-1.5"/></g><path d="M12 8.5h7.400l-3.700 4.400zM8 12.5h-7.400l3.700-4.400z" fill="#000"/><g fill="none" stroke="#fff" stroke-width="1.5"><path d="M7.5 5.2h6q2.2 0 2.2 2.2v2"/><path d="M12.5 15.800h-6q-2.2 0-2.2-2.2v-2"/></g><path d="M13.800 9.300h3.800l-1.900 2.300zM6.2 11.700h-3.800l1.900-2.300z" fill="#fff"/><path d="M7 3.5L14 17.5" stroke="#000" stroke-width="1.2"/></svg></div><div class="a" style="left:818px;top:230px;width:22px;height:21px;background:linear-gradient(135deg,#ffffff 0,#fafafa 45%,#e4e4e4 75%,#c8c8c8 100%);border:1px solid #5c5c5c;border-right-color:#484848;border-bottom-color:#484848;box-shadow:inset 1px 1px 0 #fff,inset -1px -1px 0 #a8a8a8;"><svg class="a" style="left:-1px;top:-1px" width="21" height="21" viewBox="0 0 21 21"><path d="M7.400 3h6.2l4.400 4.400v6.2l-4.400 4.400h-6.2l-4.400-4.400v-6.2z" fill="#fff" stroke="#000" stroke-width="1.100"/><path d="M8.2 5.2h4.600l3 3v4.600l-3 3h-4.600l-3-3v-4.600z" fill="#e00000" stroke="#000" stroke-width=".9"/></svg></div><div class="a" style="left:839px;top:230px;width:22px;height:21px;background:linear-gradient(135deg,#ffffff 0,#fafafa 45%,#e4e4e4 75%,#c8c8c8 100%);border:1px solid #5c5c5c;border-right-color:#484848;border-bottom-color:#484848;box-shadow:inset 1px 1px 0 #fff,inset -1px -1px 0 #a8a8a8;"><svg class="a" style="left:-1px;top:-1px" width="21" height="21" viewBox="0 0 21 21"><rect x="5.5" y="5" width="4" height="10" fill="#000"/><rect x="11.800" y="5" width="4" height="10" fill="#000"/></svg></div><div class="a" style="left:865px;top:230px;width:22px;height:21px;background:linear-gradient(135deg,#ffffff 0,#fafafa 45%,#e4e4e4 75%,#c8c8c8 100%);border:1px solid #5c5c5c;border-right-color:#484848;border-bottom-color:#484848;box-shadow:inset 1px 1px 0 #fff,inset -1px -1px 0 #a8a8a8;"><svg class="a" style="left:0;top:0" width="20" height="19" viewBox="0 0 20 19"><path d="M10 2.5a5 5 0 0 1 3 9v2.5h-6v-2.5a5 5 0 0 1 3-9z" fill="#fff" stroke="#000" stroke-width="1.1"/><path d="M8.5 8.5l1.5 2 1.5-2M10 10.5v3" fill="none" stroke="#000" stroke-width=".8"/><rect x="7.5" y="14" width="5" height="3" fill="#e8c040" stroke="#000" stroke-width=".8"/></svg></div><div class="a" style="left:891px;top:230px;width:22px;height:21px;background:linear-gradient(135deg,#ffffff 0,#fafafa 45%,#e4e4e4 75%,#c8c8c8 100%);border:1px solid #5c5c5c;border-right-color:#484848;border-bottom-color:#484848;box-shadow:inset 1px 1px 0 #fff,inset -1px -1px 0 #a8a8a8;"><svg class="a" style="left:0;top:0" width="20" height="19" viewBox="0 0 20 19"><circle cx="5.5" cy="5" r="3.2" fill="#fff" stroke="#000" stroke-width="1"/><path d="M5.5 3.2v2.2" stroke="#000" stroke-width="1"/><path d="M5.5 8.2v6" stroke="#000" stroke-width="1"/><rect x="10.5" y="2.5" width="7" height="6" fill="#c8c8c8" stroke="#888" stroke-width="1"/><path d="M1.5 14.5h9" stroke="#0040ff" stroke-width="1.2"/><rect x="9.5" y="12" width="4" height="4" fill="#fff" stroke="#000" stroke-width=".9"/><path d="M13.5 14.5h2M15 12l3.5 2.5-3.5 2.5z" stroke="#00a000" fill="#00a000" stroke-width="1"/></svg></div><div class="a" style="left:917px;top:230px;width:21.5px;height:21px;background:#ededed;border:1px solid #c9c9c9;"><svg class="a" style="left:0;top:0" width="20" height="19" viewBox="0 0 20 19"><path d="M3.5 3v8.5h5" fill="none" stroke="#a0a0a0" stroke-width="2.8"/><path d="M7 8l4 3.5-4 3.5z" fill="#9a9a9a"/><rect x="10.5" y="9.5" width="6" height="6" fill="#fbfbd0" stroke="#a0a0a0" stroke-width="1.4"/></svg></div><div class="a" style="left:938px;top:230px;width:21.5px;height:21px;background:#ededed;border:1px solid #c9c9c9;"><svg class="a" style="left:0;top:0" width="20" height="19" viewBox="0 0 20 19"><path d="M3.5 10v-5.5h10" fill="none" stroke="#a0a0a0" stroke-width="2.8"/><path d="M12 1l4.5 3.5-4.5 3.5z" fill="#9a9a9a"/><rect x="5.5" y="9.5" width="6" height="6" fill="#fbfbd0" stroke="#a0a0a0" stroke-width="1.4"/></svg></div><div class="a" style="left:959.5px;top:230px;width:21.5px;height:21px;background:#ededed;border:1px solid #c9c9c9;"><svg class="a" style="left:0;top:0" width="20" height="19" viewBox="0 0 20 19"><path d="M9 11.5h5.5v-6" fill="none" stroke="#a0a0a0" stroke-width="2.8"/><path d="M11 7l3.5-4.5 3.5 4.5z" fill="#9a9a9a"/><rect x="3.5" y="9.5" width="6" height="6" fill="#fbfbd0" stroke="#a0a0a0" stroke-width="1.4"/></svg></div><div class="a" style="left:1359px;top:230px;width:22px;height:21px;background:linear-gradient(135deg,#ffffff 0,#fafafa 45%,#e4e4e4 75%,#c8c8c8 100%);border:1px solid #5c5c5c;border-right-color:#484848;border-bottom-color:#484848;box-shadow:inset 1px 1px 0 #fff,inset -1px -1px 0 #a8a8a8;"><span class="t" style="left:0;top:-1px;width:20px;text-align:center;font-size:19px;line-height:21px;font-weight:bold;color:#ffff78;-webkit-text-stroke:1.5px #000;paint-order:stroke fill;">?</span></div><svg class="a" style="left:1385px;top:213px;" width="32" height="32"><rect x="0.5" y="0.5" width="31" height="31" fill="#fff" stroke="#000"/><rect x="3.5" y="3.5" width="18" height="15" fill="#d8d8a8" stroke="#000" stroke-width="1"/><rect x="4.6" y="4.6" width="11.8" height="8.4" fill="#000" stroke="#8c8c8c" stroke-width=".6"/><path d="M5.2 10C5.8 6 7.2 6 7.8 8.5S9.6 12 10.4 9S12 6 12.8 8.5S14.6 12 15.8 9" fill="none" stroke="#00d000" stroke-width="1.1"/><circle cx="18.5" cy="10" r="1.3" fill="#f4d8a8" stroke="#555" stroke-width=".7"/><path d="M17.700 5v2.200M19.4 5v2.200" stroke="#777" stroke-width=".7"/><path d="M5.5 15v3.5l2.5 3l4 1l3-1.5l1.5-1.5h3" fill="none" stroke="#0000a0" stroke-width="1.200"/><path d="M4.5 16l1-1.5l1 1.5" fill="none" stroke="#0000a0" stroke-width="1"/><path d="M20 15h-3.5l-2.5 1l-1.5 2.5M27 17.5h3" fill="none" stroke="#ff0000" stroke-width="1.200"/><ellipse cx="11" cy="18.5" rx="1.8" ry="2.3" fill="none" stroke="#ff0000" stroke-width="1"/><path d="M19.5 13.5l8 4-8 4.3z" fill="#fff000" stroke="#a09000" stroke-width=".9"/><path d="M21.3 17.6h3.4M23 15.900v3.4" stroke="#000" stroke-width="1.3"/><text x="24.3" y="29" font-family="Liberation Sans,sans-serif" font-size="9.5" fill="#000">1</text></svg><div class="a" style="left:720px;top:253px;width:682px;height:566px;background:#fff;"></div><div class="a" style="left:720px;top:253px;width:7px;height:583px;background:linear-gradient(to right,rgba(0,0,0,.1),rgba(0,0,0,0));z-index:5;"></div><div class="a" style="left:1402px;top:253px;width:16px;height:566px;background:linear-gradient(to right,#e9e9e9,#f2f2f2 30%,#f0f0f0);"></div><div class="a" style="left:1403px;top:337.5px;width:14px;height:388px;background:linear-gradient(to right,#f4f4f4,#ededed 45%,#d6d6d9 55%,#d0d0d3);border:1px solid #979797;border-radius:2px;box-shadow:inset 0 0 0 1px rgba(255,255,255,.7);"></div><div class="a" style="left:1406px;top:527.5px;width:8px;height:8px;background:repeating-linear-gradient(#6e6e6e 0,#6e6e6e 1px,rgba(255,255,255,.6) 1px,rgba(255,255,255,.6) 2px);height:7px;"></div><svg class="a" style="left:1406.5px;top:259.5px;" width="7" height="4"><path d="M0 4L3.5 0L7 4Z" fill="#454545"/></svg><svg class="a" style="left:1406.5px;top:809px;" width="7" height="4"><path d="M0 0L3.5 4L7 0Z" fill="#454545"/></svg><div class="a" style="left:720px;top:819px;width:682px;height:17px;background:linear-gradient(#e9e9e9,#f2f2f2 30%,#f0f0f0);"></div><div class="a" style="left:827px;top:820px;width:431px;height:15px;background:linear-gradient(#f4f4f4,#ededed 45%,#d6d6d9 55%,#d0d0d3);border:1px solid #979797;border-radius:2px;box-shadow:inset 0 0 0 1px rgba(255,255,255,.7);"></div><div class="a" style="left:1038.5px;top:824px;width:7px;height:8px;background:repeating-linear-gradient(to right,#6e6e6e 0,#6e6e6e 1px,rgba(255,255,255,.6) 1px,rgba(255,255,255,.6) 2px);"></div><svg class="a" style="left:726px;top:824px;" width="5" height="8"><path d="M4.5 0L0.5 4L4.5 8Z" fill="#3a3a3a"/></svg><svg class="a" style="left:1391px;top:824px;" width="5" height="8"><path d="M0.5 0L4.5 4L0.5 8Z" fill="#3a3a3a"/></svg><div class="a" style="left:1402px;top:819px;width:16px;height:17px;background:#f0f0f0;"></div><svg class="a" style="left:1407px;top:825px;" width="10" height="10"><rect x="7" y="1" width="2" height="2" fill="#fff"/><rect x="6" y="0" width="1.4" height="1.4" fill="#9a9a9a"/><rect x="4" y="4" width="2" height="2" fill="#fff"/><rect x="3" y="3" width="1.4" height="1.4" fill="#9a9a9a"/><rect x="7" y="4" width="2" height="2" fill="#fff"/><rect x="6" y="3" width="1.4" height="1.4" fill="#9a9a9a"/><rect x="1" y="7" width="2" height="2" fill="#fff"/><rect x="0" y="6" width="1.4" height="1.4" fill="#9a9a9a"/><rect x="4" y="7" width="2" height="2" fill="#fff"/><rect x="3" y="6" width="1.4" height="1.4" fill="#9a9a9a"/><rect x="7" y="7" width="2" height="2" fill="#fff"/><rect x="6" y="6" width="1.4" height="1.4" fill="#9a9a9a"/></svg><div class="a" style="left:720px;top:253px;width:682px;height:566px;overflow:hidden;"><div class="a" style="left:-720px;top:-253px;width:1426px;height:836px;"><div class="a" style="left:853px;top:298px;width:515px;height:489px;background:#d2ebff;border:1px solid #0000ff;"></div><div class="a" style="left:857px;top:302px;width:507px;height:481px;background:#fff;border:6px solid #808080;border-radius:7px 7px 2px 2px;"></div><div class="a" style="left:773px;top:298px;width:80px;height:90px;background:#d2ebff;border:1px solid #0000ff;"></div><svg class="a" style="left:798px;top:300px;" width="18" height="16"><path d="M5 0.5h8l4 4v7l-4 4h-8l-4-4v-7z" fill="#000"/><ellipse cx="9" cy="8" rx="6.3" ry="5.8" fill="#ffffcc"/><path d="M9 4.5v4M9 8.5l2.5-3" stroke="#000" stroke-width="1" fill="none"/><path d="M4.5 8h1M12.5 8h1M9 11v1" stroke="#000" stroke-width="1"/></svg><span class="t" style="font-size:13px;line-height:17px;top:302px;left:821.5px;letter-spacing:-1.844px;">ms</span><div class="a" style="left:773px;top:317px;width:71px;height:16px;background:#fcfcfc;border:1px solid #0000ff;"></div><div class="a" style="left:773px;top:332px;width:71px;height:16px;background:#fcfcfc;border:1px solid #0000ff;"></div><div class="a" style="left:773px;top:347px;width:71px;height:16px;background:#fcfcfc;border:1px solid #0000ff;"></div><div class="a" style="left:773px;top:362px;width:71px;height:16px;background:#fcfcfc;border:1px solid #0000ff;"></div><div class="a" style="left:846px;top:320px;width:4px;height:55px;background:#000;"></div><svg class="a" style="left:809px;top:379px;" width="9" height="8"><path d="M0.5 0.5L4.5 4L8.5 0.5M0.5 3.5L4.5 7L8.5 3.5" fill="none" stroke="#8c8c8c" stroke-width=".8"/></svg><div class="a" style="left:797px;top:319px;width:45.5px;height:12px;background:#c8c8c8;border:1.5px solid #000;overflow:hidden;"><span class="t" style="left:0.5px;top:-0.5px;font-size:12px;line-height:14px;letter-spacing:-.3px;">1 kHz</span></div><div class="a" style="left:797px;top:349px;width:45.5px;height:12px;background:#c8c8c8;border:1.5px solid #000;overflow:hidden;"><span class="t" style="left:0.5px;top:-0.5px;font-size:12px;line-height:14px;letter-spacing:-.3px;">100</span></div><div class="a" style="left:797px;top:364px;width:45.5px;height:12px;background:#c8c8c8;border:1.5px solid #000;overflow:hidden;"><span class="t" style="left:0.5px;top:-0.5px;font-size:12px;line-height:14px;letter-spacing:-.3px;">0</span></div><svg class="a" style="left:775px;top:322px;" width="3.5" height="7"><path d="M0 0L3.5 3.5L0 7Z" fill="#ff00ff"/></svg><svg class="a" style="left:775px;top:337px;" width="3.5" height="7"><path d="M0 0L3.5 3.5L0 7Z" fill="#0000ff"/></svg><svg class="a" style="left:775px;top:352px;" width="3.5" height="7"><path d="M0 0L3.5 3.5L0 7Z" fill="#0000ff"/></svg><svg class="a" style="left:775px;top:367px;" width="3.5" height="7"><path d="M0 0L3.5 3.5L0 7Z" fill="#0000ff"/></svg><span class="t" style="font-size:13px;line-height:17px;top:331.5px;left:802.5px;letter-spacing:-0.344px;color:#0000ff;">dt</span><svg class="a" style="left:779px;top:319px;" width="17" height="13"><circle cx="5" cy="7" r="4.2" fill="#ffffcc" stroke="#000" stroke-width="1"/><path d="M3.5 1.5h3M5 1.5v1.5M5 4.5v2.5h2" fill="none" stroke="#000" stroke-width="1"/><path d="M9.5 10.5v-5h2v5h2v-5h2" fill="none" stroke="#0000ff" stroke-width="1"/></svg><svg class="a" style="left:779px;top:349px;" width="17" height="13"><text x="0.5" y="6.5" font-family="Liberation Sans,sans-serif" font-size="8" fill="#ff0000">3</text><text x="5.5" y="10" font-family="Liberation Sans,sans-serif" font-size="8" fill="#008000">2</text><text x="11" y="13" font-family="Liberation Sans,sans-serif" font-size="7" fill="#0000ff">1</text></svg><svg class="a" style="left:779px;top:363px;" width="17" height="14"><path d="M5.5 0v14M7.5 0v14M9.5 0v14M0.5 5h16M0.5 7h16M0.5 9h16" stroke="#8a7a00" stroke-width="1" shape-rendering="crispEdges"/><rect x="3" y="3" width="9" height="8" fill="#585858" stroke="#303030"/></svg><div class="a" style="left:750px;top:331px;width:13px;height:19px;background:#fff;border:2px solid #0000ff;"></div><span class="t" style="font-size:12px;line-height:16px;top:332.84px;left:752.5px;">0</span><div class="a" style="left:763px;top:340px;width:10px;height:1px;background:#0000ff;"></div><div class="a" style="left:1368px;top:298px;width:52px;height:45px;background:#fff;border:1px solid #0000ff;"></div><div class="a" style="left:1369px;top:299px;width:51px;height:18px;background:#d2ebff;"></div><div class="a" style="left:1368px;top:317px;width:52px;height:1px;background:#0000ff;"></div><div class="a" style="left:1368px;top:332px;width:52px;height:1px;background:#0000ff;"></div><div class="a" style="left:1377px;top:318px;width:1px;height:14px;background:#0000ff;"></div><div class="a" style="left:1371px;top:320px;width:4.5px;height:10px;background:#000;"></div><svg class="a" style="left:1389px;top:300px;" width="18" height="16"><path d="M5 0.5h8l4 4v7l-4 4h-8l-4-4v-7z" fill="#000"/><ellipse cx="9" cy="8" rx="6.3" ry="5.8" fill="#ffffcc"/><path d="M9 4.5v4M9 8.5l2.5-3" stroke="#000" stroke-width="1" fill="none"/><path d="M4.5 8h1M12.5 8h1M9 11v1" stroke="#000" stroke-width="1"/></svg><span class="t" style="font-size:12px;line-height:16px;top:316.84px;left:1381.5px;letter-spacing:-0.503px;color:#a8982a;">Fehler</span><svg class="a" style="left:1396px;top:334px;" width="9" height="8"><path d="M0.5 0.5L4.5 4L8.5 0.5M0.5 3.5L4.5 7L8.5 3.5" fill="none" stroke="#8c8c8c" stroke-width=".8"/></svg><div class="a" style="left:863px;top:390px;width:172px;height:274.5px;background:#fff;border:1px solid #0000ff;"></div><div class="a" style="left:863px;top:399px;width:172px;height:1px;background:#0000ff;"></div><div class="a" style="left:863px;top:654px;width:172px;height:1px;background:#0000ff;"></div><div class="a" style="left:872px;top:400px;width:1px;height:254px;background:#0000ff;"></div><div class="a" style="left:866px;top:402px;width:4.5px;height:250px;background:#000;"></div><div class="a" style="left:873px;top:400px;width:161px;height:254px;background:repeating-linear-gradient(#fbfbfb 0,#fbfbfb 14px,#0000ff 14px,#0000ff 15px);"></div><span class="t" style="font-size:12px;line-height:16px;top:400.14px;left:876px;letter-spacing:-0.503px;color:#a39427;">Fehler</span><svg class="a" style="left:1030px;top:404.5px;" width="3.5" height="6"><path d="M0 0L3.5 3L0 6Z" fill="#8a7a00"/></svg><span class="t" style="font-size:12px;line-height:16px;top:415.14px;left:876px;letter-spacing:-0.253px;color:#0000ff;">Erwartetes Ende [i-1]</span><svg class="a" style="left:1030px;top:419.5px;" width="3.5" height="6"><path d="M0 0L3.5 3L0 6Z" fill="#0000ff"/></svg><span class="t" style="font-size:12px;line-height:16px;top:430.14px;left:876px;letter-spacing:-0.119px;color:#0000ff;">Tatsächliches Ende [i-1]</span><svg class="a" style="left:1030px;top:434.5px;" width="3.5" height="6"><path d="M0 0L3.5 3L0 6Z" fill="#0000ff"/></svg><span class="t" style="font-size:12px;line-height:16px;top:445.14px;left:876px;letter-spacing:-0.14px;color:#1f8c1f;">Verspätete Beendigung? [i-1]</span><svg class="a" style="left:1030px;top:449.5px;" width="3.5" height="6"><path d="M0 0L3.5 3L0 6Z" fill="#008000"/></svg><span class="t" style="font-size:12px;line-height:16px;top:460.14px;left:876px;letter-spacing:-0.195px;color:#0000ff;">Erwarteter Start [i]</span><svg class="a" style="left:1030px;top:464.5px;" width="3.5" height="6"><path d="M0 0L3.5 3L0 6Z" fill="#0000ff"/></svg><span class="t" style="font-size:12px;line-height:16px;top:475.14px;left:876px;letter-spacing:-0.062px;color:#0000ff;">Tatsächlicher Start [i]</span><svg class="a" style="left:1030px;top:479.5px;" width="3.5" height="6"><path d="M0 0L3.5 3L0 6Z" fill="#0000ff"/></svg><span class="t" style="font-size:12px;line-height:16px;top:490.14px;left:876px;letter-spacing:-0.229px;color:#0000ff;">Periode</span><svg class="a" style="left:1030px;top:494.5px;" width="3.5" height="6"><path d="M0 0L3.5 3L0 6Z" fill="#0000ff"/></svg><span class="t" style="font-size:12px;line-height:16px;top:505.14px;left:876px;letter-spacing:-0.332px;color:#0000ff;">Frist</span><svg class="a" style="left:1030px;top:509.5px;" width="3.5" height="6"><path d="M0 0L3.5 3L0 6Z" fill="#0000ff"/></svg><span class="t" style="font-size:12px;line-height:16px;top:520.14px;left:876px;letter-spacing:-0.059px;color:#0000ff;">Offset</span><svg class="a" style="left:1030px;top:524.5px;" width="3.5" height="6"><path d="M0 0L3.5 3L0 6Z" fill="#0000ff"/></svg><span class="t" style="font-size:12px;line-height:16px;top:535.14px;left:876px;letter-spacing:0.082px;color:#0000ff;">Priorität</span><svg class="a" style="left:1030px;top:539.5px;" width="3.5" height="6"><path d="M0 0L3.5 3L0 6Z" fill="#0000ff"/></svg><span class="t" style="font-size:12px;line-height:16px;top:550.14px;left:876px;letter-spacing:0.266px;color:#0000ff;">Timeout</span><svg class="a" style="left:1030px;top:554.5px;" width="3.5" height="6"><path d="M0 0L3.5 3L0 6Z" fill="#0000ff"/></svg><span class="t" style="font-size:12px;line-height:16px;top:565.14px;left:876px;letter-spacing:0.117px;color:#0000ff;">Modus</span><svg class="a" style="left:1030px;top:569.5px;" width="3.5" height="6"><path d="M0 0L3.5 3L0 6Z" fill="#0000ff"/></svg><span class="t" style="font-size:12px;line-height:16px;top:580.14px;left:876px;letter-spacing:0.09px;color:#0000ff;">Aktivierungsgrund</span><svg class="a" style="left:1030px;top:584.5px;" width="3.5" height="6"><path d="M0 0L3.5 3L0 6Z" fill="#0000ff"/></svg><span class="t" style="font-size:12px;line-height:16px;top:595.14px;left:876px;letter-spacing:-0.267px;color:#0000ff;">Globale Endzeit</span><svg class="a" style="left:1030px;top:599.5px;" width="3.5" height="6"><path d="M0 0L3.5 3L0 6Z" fill="#0000ff"/></svg><span class="t" style="font-size:12px;line-height:16px;top:610.14px;left:876px;letter-spacing:-0.232px;color:#0000ff;">Globale Startzeit</span><svg class="a" style="left:1030px;top:614.5px;" width="3.5" height="6"><path d="M0 0L3.5 3L0 6Z" fill="#0000ff"/></svg><span class="t" style="font-size:12px;line-height:16px;top:625.14px;left:876px;letter-spacing:-0.076px;color:#0000ff;">Iterationsdauer</span><svg class="a" style="left:1030px;top:629.5px;" width="3.5" height="6"><path d="M0 0L3.5 3L0 6Z" fill="#0000ff"/></svg><span class="t" style="font-size:12px;line-height:16px;top:640.14px;left:876px;letter-spacing:-0.504px;color:#0000ff;">Prozessor</span><svg class="a" style="left:1030px;top:644.5px;" width="3.5" height="6"><path d="M0 0L3.5 3L0 6Z" fill="#0000ff"/></svg><div class="a" style="left:945px;top:658px;width:9px;height:1px;background:#8c8c8c;"></div><div class="a" style="left:945px;top:660px;width:9px;height:1px;background:#8c8c8c;"></div><div class="a" style="left:1278px;top:390px;width:80px;height:35px;background:#d2ebff;border:1px solid #0000ff;"></div><div class="a" style="left:1278px;top:399px;width:71px;height:16px;background:#fcfcfc;border:1px solid #0000ff;"></div><div class="a" style="left:1348px;top:399px;width:10px;height:1px;background:#0000ff;"></div><div class="a" style="left:1348px;top:414px;width:10px;height:1px;background:#0000ff;"></div><div class="a" style="left:1351px;top:402px;width:4px;height:10px;background:#000;"></div><div class="a" style="left:1302px;top:401px;width:45px;height:12px;background:#d0d0d0;border:1.5px solid #000;"></div><div class="a" style="left:1307px;top:407.5px;width:3.5px;height:1px;background:#000;"></div><div class="a" style="left:1312px;top:407.5px;width:3.5px;height:1px;background:#000;"></div><svg class="a" style="left:1280px;top:404px;" width="3.5" height="7"><path d="M0 0L3.5 3.5L0 7Z" fill="#8a7a00"/></svg><span class="t" style="font-size:8px;line-height:12px;top:402.23px;left:1285.5px;letter-spacing:-0.963px;font-weight:bold;">?!</span><svg class="a" style="left:1314.5px;top:416px;" width="9" height="8"><path d="M0.5 0.5L4.5 4L8.5 0.5M0.5 3.5L4.5 7L8.5 3.5" fill="none" stroke="#8c8c8c" stroke-width=".8"/></svg><svg class="a" style="left:0px;top:0px;" width="1426" height="836"><g fill="none" stroke="#0000ff" stroke-width="1" shape-rendering="crispEdges"><path d="M1035 572.5H1043M1035 647.5H1046M1119 486.5H1160.5V493.5H1190M1164.5 493.5V555.5H1190M1168.5 555.5V620.5H1189"/></g><circle cx="1164.5" cy="493.5" r="2.5" fill="#0000ff"/><circle cx="1168.5" cy="555.5" r="2.5" fill="#0000ff"/><path d="M1267 756.5H1272.5V768.5H1341" fill="none" stroke="#008000" stroke-width="1" stroke-dasharray="1 1" shape-rendering="crispEdges"/></svg><span class="t" style="font-size:12px;line-height:16px;top:536.84px;left:1044.5px;letter-spacing:0.242px;">Modus</span><div class="a" style="left:1043px;top:553px;width:38px;height:38px;background:#fff;border:1px solid #0000ff;"></div><svg class="a" style="left:1043px;top:553px;" width="38" height="38"><rect x="3.5" y="3.5" width="31" height="31" fill="#fff" stroke="#0000ff"/><rect x="13.5" y="9.5" width="3" height="20" fill="#808080" stroke="#000"/><path d="M12.5 8.5l2.5-3 2.5 3z" fill="#000"/><path d="M9 9.5h2M9 15.5h2M9 22.5h2M9 28.5h2" stroke="#000"/><path d="M12.5 17.5l4.5-2.5h1.5v5h-1.5z" fill="#1e90ff" stroke="#000" stroke-width=".8"/><text x="25" y="15.5" font-family="Liberation Sans,sans-serif" font-size="9" fill="#000">1</text><path d="M21 24h2" stroke="#ff4000"/><path d="M23 21.5l9 4.5-5 3-4 1z" fill="#ffe800" stroke="#000" stroke-width=".8"/><path d="M25 26h3M26.5 24.5v3" stroke="#000" stroke-width=".8"/><rect x="11" y="29" width="16" height="7.3" fill="#fff"/><path d="M11.5 34.5V29.5H26.5V34.5" fill="none" stroke="#0000ff" stroke-width="1.2"/><path d="M14.5 33l3.3-2.6v5.2zM23.5 33l-3.3-2.6v5.2z" fill="#0000ff"/><path d="M2.5 15l4.5 4.5-4.5 4.5z" fill="#fff" stroke="#000" stroke-width=".9"/></svg><span class="t" style="font-size:12px;line-height:16px;top:611.84px;left:1047.5px;letter-spacing:-0.566px;">Prozessor</span><div class="a" style="left:1046px;top:628px;width:38px;height:38px;background:#fff;border:1px solid #0000ff;"></div><svg class="a" style="left:1046px;top:628px;" width="38" height="38"><rect x="3.5" y="3.5" width="31" height="31" fill="#b3b3b3" stroke="#0000ff"/><rect x="9.5" y="12.5" width="20" height="11" fill="#fff" stroke="#9a9a9a" stroke-dasharray="1 1"/><text x="10.3" y="21.8" font-family="Liberation Sans,sans-serif" font-size="9.5" fill="#000" letter-spacing="-.4">1.23</text><rect x="11" y="29" width="16" height="7.3" fill="#fff"/><path d="M11.5 34.5V29.5H26.5V34.5" fill="none" stroke="#0000ff" stroke-width="1.2"/><text x="12.6" y="35.8" font-family="Liberation Mono,monospace" font-size="7.6" font-weight="bold" fill="#0000ff" letter-spacing="-.1">I32</text><path d="M2.5 15l4.5 4.5-4.5 4.5z" fill="#fff" stroke="#000" stroke-width=".9"/></svg><span class="t" style="font-size:12px;line-height:16px;top:457.84px;left:1191px;letter-spacing:-0.035px;">Signalverlaufsdiagramm</span><div class="a" style="left:1190px;top:474px;width:38px;height:38px;background:#fff;border:1px solid #0000ff;"></div><svg class="a" style="left:1190px;top:474px;" width="38" height="38"><rect x="3.6" y="3.6" width="30.8" height="30.8" fill="#b8b8b8" stroke="#0000ff" stroke-width="1.3"/><path d="M4 4h30v1h-30zM4 4h1v30h-1z" fill="#e6e6e6"/><path d="M32 5h2v29h-2z" fill="#8c8c8c"/><path d="M5 31h29v3h-29z" fill="#7c7c7c"/><rect x="11.5" y="6.5" width="18" height="17.5" fill="#000"/><path d="M12.5 17.5h3l2-2.5 1-5 .8 5 1.7 2.5 1.5 3 1.5-3h3.5" fill="none" stroke="#fff" stroke-width="1"/><path d="M19.5 10.5h2M20 12.5h2M20.5 14.5h2M23.5 18.5h2M23 20.5h2" stroke="#d0d0d0" stroke-width=".8"/><text x="5.5" y="10" font-family="Liberation Sans,sans-serif" font-size="6" font-weight="bold" fill="#000">2</text><text x="5.5" y="18" font-family="Liberation Sans,sans-serif" font-size="6" font-weight="bold" fill="#000">1</text><text x="5.5" y="26" font-family="Liberation Sans,sans-serif" font-size="6" font-weight="bold" fill="#000">0</text><text x="10" y="30" font-family="Liberation Sans,sans-serif" font-size="5.5" font-weight="bold" fill="#000">00 · 10</text><rect x="11" y="29" width="16" height="7.3" fill="#fff"/><path d="M11.5 34.5V29.5H26.5V34.5" fill="none" stroke="#0000ff" stroke-width="1.2"/><text x="12.6" y="35.8" font-family="Liberation Mono,monospace" font-size="7.6" font-weight="bold" fill="#0000ff" letter-spacing="-.1">I32</text><path d="M2.5 15l4.5 4.5-4.5 4.5z" fill="#fff" stroke="#000" stroke-width=".9"/></svg><span class="t" style="font-size:12px;line-height:16px;top:519.84px;left:1191px;letter-spacing:-0.075px;">Signalverlaufsdiagramm 2</span><div class="a" style="left:1190px;top:536px;width:38px;height:38px;background:#fff;border:1px solid #0000ff;"></div><svg class="a" style="left:1190px;top:536px;" width="38" height="38"><rect x="3.6" y="3.6" width="30.8" height="30.8" fill="#b8b8b8" stroke="#0000ff" stroke-width="1.3"/><path d="M4 4h30v1h-30zM4 4h1v30h-1z" fill="#e6e6e6"/><path d="M32 5h2v29h-2z" fill="#8c8c8c"/><path d="M5 31h29v3h-29z" fill="#7c7c7c"/><rect x="11.5" y="6.5" width="18" height="17.5" fill="#000"/><path d="M12.5 17.5h3l2-2.5 1-5 .8 5 1.7 2.5 1.5 3 1.5-3h3.5" fill="none" stroke="#fff" stroke-width="1"/><path d="M19.5 10.5h2M20 12.5h2M20.5 14.5h2M23.5 18.5h2M23 20.5h2" stroke="#d0d0d0" stroke-width=".8"/><text x="5.5" y="10" font-family="Liberation Sans,sans-serif" font-size="6" font-weight="bold" fill="#000">2</text><text x="5.5" y="18" font-family="Liberation Sans,sans-serif" font-size="6" font-weight="bold" fill="#000">1</text><text x="5.5" y="26" font-family="Liberation Sans,sans-serif" font-size="6" font-weight="bold" fill="#000">0</text><text x="10" y="30" font-family="Liberation Sans,sans-serif" font-size="5.5" font-weight="bold" fill="#000">00 · 10</text><rect x="11" y="29" width="16" height="7.3" fill="#fff"/><path d="M11.5 34.5V29.5H26.5V34.5" fill="none" stroke="#0000ff" stroke-width="1.2"/><text x="12.6" y="35.8" font-family="Liberation Mono,monospace" font-size="7.6" font-weight="bold" fill="#0000ff" letter-spacing="-.1">I32</text><path d="M2.5 15l4.5 4.5-4.5 4.5z" fill="#fff" stroke="#000" stroke-width=".9"/></svg><span class="t" style="font-size:12px;line-height:16px;top:584.84px;left:1189.5px;letter-spacing:-0.075px;">Signalverlaufsdiagramm 3</span><div class="a" style="left:1189px;top:601px;width:38px;height:38px;background:#fff;border:1px solid #0000ff;"></div><svg class="a" style="left:1189px;top:601px;" width="38" height="38"><rect x="3.6" y="3.6" width="30.8" height="30.8" fill="#b8b8b8" stroke="#0000ff" stroke-width="1.3"/><path d="M4 4h30v1h-30zM4 4h1v30h-1z" fill="#e6e6e6"/><path d="M32 5h2v29h-2z" fill="#8c8c8c"/><path d="M5 31h29v3h-29z" fill="#7c7c7c"/><rect x="11.5" y="6.5" width="18" height="17.5" fill="#000"/><path d="M12.5 17.5h3l2-2.5 1-5 .8 5 1.7 2.5 1.5 3 1.5-3h3.5" fill="none" stroke="#fff" stroke-width="1"/><path d="M19.5 10.5h2M20 12.5h2M20.5 14.5h2M23.5 18.5h2M23 20.5h2" stroke="#d0d0d0" stroke-width=".8"/><text x="5.5" y="10" font-family="Liberation Sans,sans-serif" font-size="6" font-weight="bold" fill="#000">2</text><text x="5.5" y="18" font-family="Liberation Sans,sans-serif" font-size="6" font-weight="bold" fill="#000">1</text><text x="5.5" y="26" font-family="Liberation Sans,sans-serif" font-size="6" font-weight="bold" fill="#000">0</text><text x="10" y="30" font-family="Liberation Sans,sans-serif" font-size="5.5" font-weight="bold" fill="#000">00 · 10</text><rect x="11" y="29" width="16" height="7.3" fill="#fff"/><path d="M11.5 34.5V29.5H26.5V34.5" fill="none" stroke="#0000ff" stroke-width="1.2"/><text x="12.6" y="35.8" font-family="Liberation Mono,monospace" font-size="7.6" font-weight="bold" fill="#0000ff" letter-spacing="-.1">I32</text><path d="M2.5 15l4.5 4.5-4.5 4.5z" fill="#fff" stroke="#000" stroke-width=".9"/></svg><span class="t" style="font-size:12px;line-height:16px;top:720.84px;left:1234px;letter-spacing:-0.09px;">Stopp</span><div class="a" style="left:1229px;top:737px;width:38px;height:38px;background:#fff;border:1px solid #008000;"></div><svg class="a" style="left:1229px;top:737px;" width="38" height="38"><rect x="1" y="1" width="36" height="36" fill="#fff" stroke="#008000" stroke-width="2"/><rect x="3.5" y="3.5" width="31" height="31" fill="#b3b3b3" stroke="#008000" stroke-width="1"/><ellipse cx="18" cy="19.5" rx="12.5" ry="5.5" fill="#9a9a9a"/><ellipse cx="17.5" cy="18.5" rx="12" ry="4.8" fill="#e4e4e4" stroke="#8a8a8a" stroke-width=".6"/><path d="M22 16h3q5 1.3 5 2.8t-5 2.8h-3z" fill="#30e030"/><rect x="11" y="29" width="16" height="7.3" fill="#fff"/><path d="M11.5 34.5V29.5H26.5V34.5" fill="none" stroke="#008000" stroke-width="1.2"/><text x="13.3" y="36" font-family="Liberation Sans,sans-serif" font-size="7" font-weight="bold" fill="#008000" letter-spacing="1.6">TF</text><path d="M32.5 15l4.5 4.5-4.5 4.5z" fill="#fff" stroke="#000" stroke-width=".9"/></svg><div class="a" style="left:1103px;top:478px;width:16px;height:16px;background:#ffffc8;border:2px solid #0000ff;"></div><span class="t" style="font-size:13px;line-height:17px;top:478px;left:1109px;color:#0000ff;font-weight:bold;">i</span><div class="a" style="left:1341px;top:760px;width:16px;height:16px;background:#ffffd0;border:1px solid #008000;"></div><svg class="a" style="left:1341px;top:760px;" width="16" height="16"><path d="M5.5 2.5h5l3 3v5l-3 3h-5l-3-3v-5z" fill="#fff" stroke="#000" stroke-width="1"/><circle cx="8" cy="8" r="4.3" fill="#ff0000"/></svg></div></div></div>
</body></html>
